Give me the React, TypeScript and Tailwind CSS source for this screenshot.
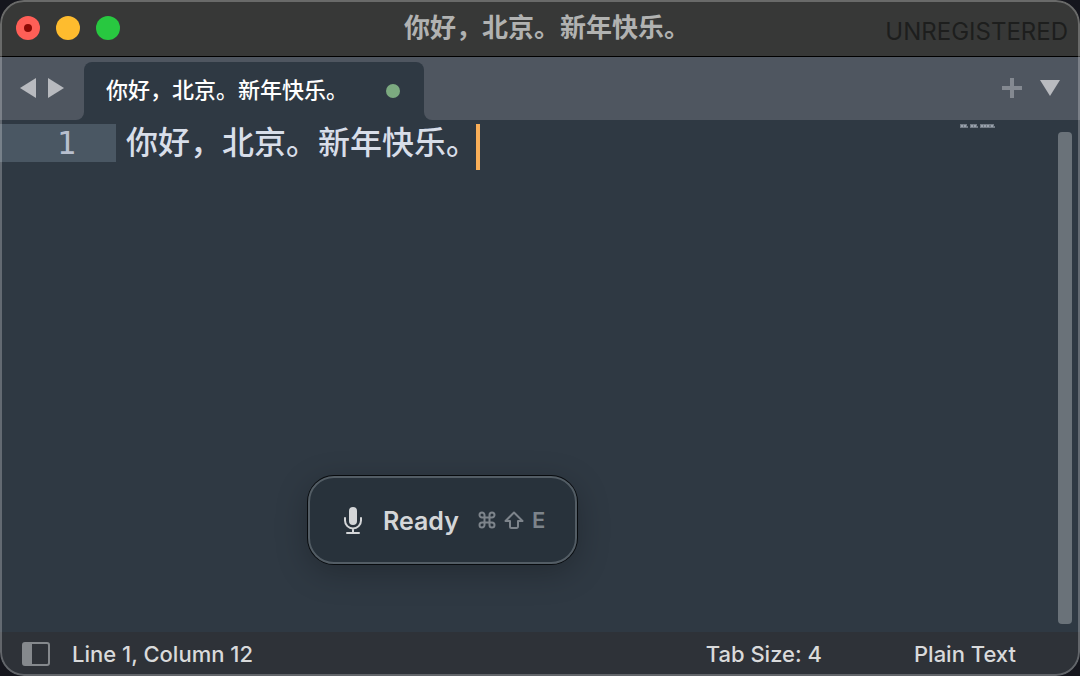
import { useState } from 'react';

const INITIAL_TEXT = '你好，北京。新年快乐。';

function TitleBar({ title }: { title: string }) {
  return (
    <header className="grid h-14 shrink-0 grid-cols-[1fr_auto_1fr] items-center bg-[#373837] px-4">
      <div className="flex gap-4">
        <button
          aria-label="Close"
          className="flex size-6 items-center justify-center rounded-full bg-[#ff5f57]"
        >
          <span className="size-2 rounded-full bg-[#8c0a05]" />
        </button>
        <button aria-label="Minimize" className="size-6 rounded-full bg-[#febc2e]" />
        <button aria-label="Zoom" className="size-6 rounded-full bg-[#28c840]" />
      </div>
      <h1 className="pl-3.5 text-[26px] leading-8 font-bold text-[#b1b2b1]">{title}</h1>
      <span className="-mr-1 pt-2 text-right text-2xl leading-8 text-[#1d1e1d]">UNREGISTERED</span>
    </header>
  );
}

function TabBar({ title }: { title: string }) {
  return (
    <nav className="flex h-16 shrink-0 border-t border-black bg-[#2f3943]">
      <div className="flex w-21 items-center gap-3 rounded-br-lg bg-[#4f5660] pb-0.5 pl-5">
        <button aria-label="Previous tab">
          <svg className="h-5 w-4 fill-[#b8babf]" viewBox="0 0 16 20">
            <path d="M16 0v20L0 10z" />
          </svg>
        </button>
        <button aria-label="Next tab">
          <svg className="h-5 w-4 fill-[#b8babf]" viewBox="0 0 16 20">
            <path d="M0 0v20l16-10z" />
          </svg>
        </button>
      </div>
      <div className="w-85 bg-[#4f5660] pt-[5px]">
        <button className="flex h-full w-full items-center justify-between rounded-t-lg bg-[#2f3943] pr-6 pl-[22px] text-[22px] leading-8 font-medium text-white">
          <span className="pb-0.5">{title}</span>
          <span className="size-3.5 rounded-full bg-[#7caa80]" />
        </button>
      </div>
      <div className="flex flex-1 items-center justify-end gap-[18px] rounded-bl-lg bg-[#4f5660] pr-5 pb-0.5">
        <button aria-label="New tab">
          <svg className="size-5 fill-[#848991]" viewBox="0 0 20 20">
            <path d="M8 0h4v8h8v4h-8v8H8v-8H0V8h8z" />
          </svg>
        </button>
        <button aria-label="Tab list">
          <svg className="h-4 w-5 fill-[#b8babf]" viewBox="0 0 20 16">
            <path d="M0 0h20L10 16z" />
          </svg>
        </button>
      </div>
    </nav>
  );
}

function Minimap() {
  return (
    <svg className="h-1 w-[98px] shrink-0" viewBox="0 0 98 4">
      <g fill="#d8dee9" fillOpacity="0.4">
        <path d="M0 0h7v4H0zM10 0h7v4h-7zM20 0h14v4H20z" />
      </g>
      <g fill="#d8dee9" fillOpacity="0.4">
        <path d="M1 1h2v2H1zM4 1h2v2H4zM7 2h1v2H7zM11 1h2v2h-2zM14 1h2v2h-2zM17 2h1v2h-1zM21 1h2v2h-2zM24 1h2v2h-2zM27 1h2v2h-2zM31 1h2v2h-2zM34 2h1v2h-1z" />
      </g>
    </svg>
  );
}

function Editor({ text, onChange }: { text: string; onChange: (text: string) => void }) {
  return (
    <main className="flex min-h-0 flex-1 bg-[#2f3943] pt-1">
      <div className="h-[38px] w-29 bg-[#4a5763] pr-10 text-right font-['DejaVu_Sans_Mono',monospace] text-[32px] leading-[38px] text-[#b8bfce]">
        1
      </div>
      <div className="relative flex flex-1 pl-2.5">
        <textarea
          aria-label="Editor"
          spellCheck={false}
          value={text}
          onChange={(e) => onChange(e.target.value)}
          className="h-full w-full resize-none overflow-hidden bg-transparent font-['Noto_Sans_CJK_SC',monospace] text-[32px] leading-8 font-medium text-[#d8dee9] outline-none"
        />
        <span className="absolute top-0 left-[360px] h-[46px] w-1 bg-[#f9ae58]" />
      </div>
      <Minimap />
      <div className="pt-2 pr-2 pb-2">
        <div className="h-full w-3.5 rounded bg-[#6a7279]" />
      </div>
    </main>
  );
}

function StatusBar({ column }: { column: number }) {
  return (
    <footer className="flex h-11 shrink-0 items-center bg-[#2e3238] pr-16 pl-[22px] text-[22px] leading-8 font-medium text-[#d9dadb]">
      <button aria-label="Toggle sidebar">
        <svg className="h-6 w-7" viewBox="0 0 28 24">
          <rect x="1" y="1" width="26" height="22" rx="2" fill="none" stroke="#85898d" strokeWidth="2" />
          <path d="M1 1h9v22H1z" fill="#85898d" />
        </svg>
      </button>
      <span className="ml-[22px] flex-1">Line 1, Column {column}</span>
      <button className="mr-[92px]">Tab Size: 4</button>
      <button>Plain Text</button>
    </footer>
  );
}

function DictationPill() {
  return (
    <div
      role="status"
      className="absolute bottom-28 left-[308px] flex h-[88px] w-[269px] items-center rounded-[26px] border-2 border-[#535d65] bg-[#28323b] pl-[33px] shadow-[0_0_0_1px_#080b0e,0_8px_32px_rgba(0,0,0,0.25)]"
    >
      <svg
        className="mr-5 h-7 w-5"
        viewBox="0 0 20 28"
        fill="none"
        stroke="#d4d6d8"
        strokeWidth="2"
        strokeLinecap="round"
      >
        <rect x="6" y="1" width="8" height="18" rx="4" fill="#d4d6d8" stroke="none" />
        <path d="M2 12v2.5a8 8 0 0 0 16 0V12M10 23v4M4 27h12" />
      </svg>
      <span className="pt-0.5 text-[25px] leading-8 font-semibold text-[#d4d6d8]">Ready</span>
      <span className="ml-[19px] flex items-center gap-2 text-[#7d848b]">
        <svg className="size-[18px]" viewBox="0 0 18 18" fill="none" stroke="currentColor" strokeWidth="2">
          <path d="M6.5 6.5h5v5h-5zM6.5 6.5H4A2.5 2.5 0 1 1 6.5 4zM11.5 6.5V4A2.5 2.5 0 1 1 14 6.5zM11.5 11.5H14a2.5 2.5 0 1 1-2.5 2.5zM6.5 11.5V14A2.5 2.5 0 1 1 4 11.5z" />
        </svg>
        <svg
          className="h-[18px] w-5"
          viewBox="0 0 20 18"
          fill="none"
          stroke="currentColor"
          strokeWidth="2"
          strokeLinejoin="round"
        >
          <path d="M10 1.5 18.5 10H14v5.5a1.5 1.5 0 0 1-1.5 1.5h-5A1.5 1.5 0 0 1 6 15.5V10H1.5z" />
        </svg>
        <kbd className="font-['Inter',sans-serif] text-[22px] leading-8 font-semibold">E</kbd>
      </span>
    </div>
  );
}

export default function App() {
  const [text, setText] = useState(INITIAL_TEXT);

  return (
    <div className="h-screen bg-[#15161d] font-['Inter','Noto_Sans_CJK_SC',sans-serif]">
      <div className="relative flex h-full flex-col overflow-hidden rounded-[24px]">
        <TitleBar title={text} />
        <TabBar title={text} />
        <Editor text={text} onChange={setText} />
        <StatusBar column={text.length + 1} />
        <DictationPill />
        <div className="pointer-events-none absolute inset-0 rounded-[24px] border-2 border-white/25" />
      </div>
    </div>
  );
}
